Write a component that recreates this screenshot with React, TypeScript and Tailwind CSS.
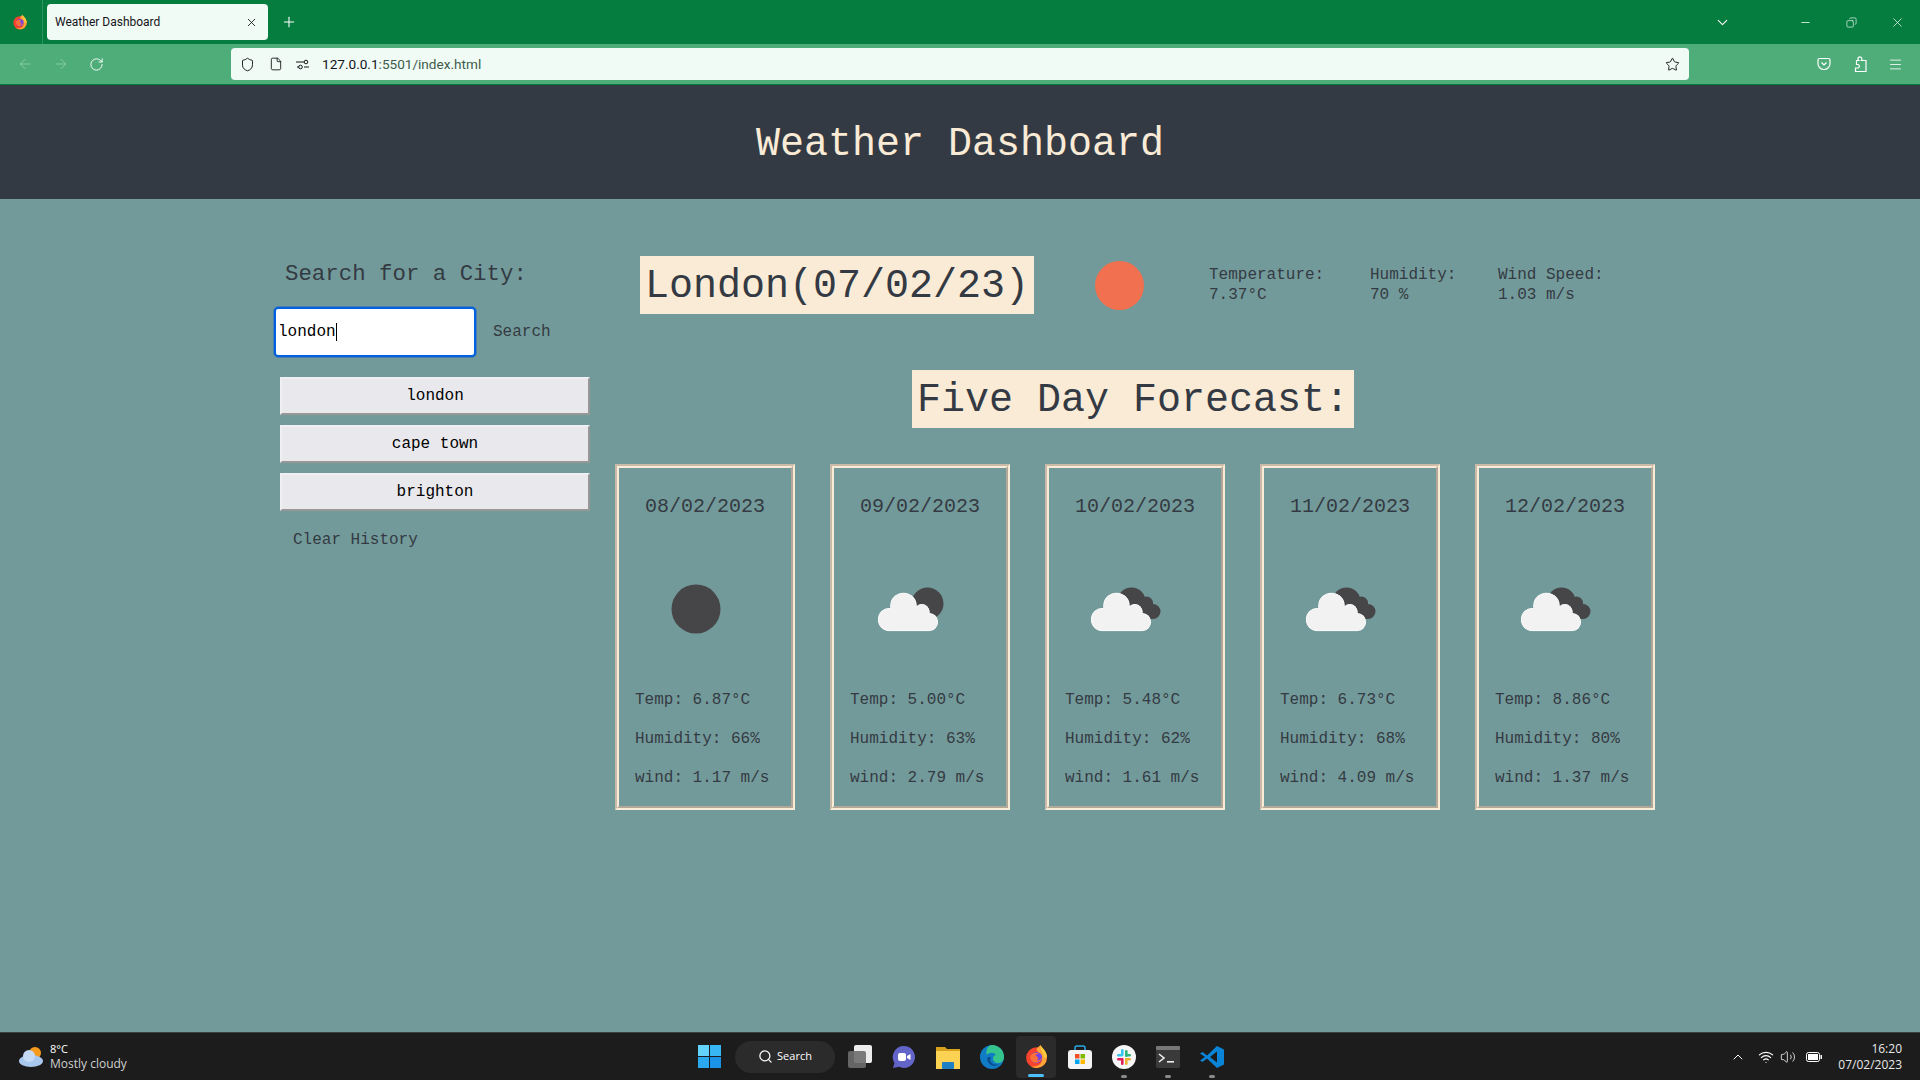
import { ChevronDown, ChevronUp, Copy, Minus, X, Plus, ArrowLeft, ArrowRight, RotateCw, Shield, File, Star, Menu, Search, Wifi, Volume2 } from "lucide-react";

const mono = "font-['Liberation_Mono',monospace]";

const days = [
  { date: "08/02/2023", temp: "6.87", hum: "66", wind: "1.17", icon: "sun" },
  { date: "09/02/2023", temp: "5.00", hum: "63", wind: "2.79", icon: "few" },
  { date: "10/02/2023", temp: "5.48", hum: "62", wind: "1.61", icon: "broken" },
  { date: "11/02/2023", temp: "6.73", hum: "68", wind: "4.09", icon: "broken" },
  { date: "12/02/2023", temp: "8.86", hum: "80", wind: "1.37", icon: "broken" },
];

const CloudShape = ({ fill, stroke }: { fill: string; stroke?: string }) => {
  return (
    <g fill={fill} stroke={stroke} strokeWidth={stroke ? 1.2 : 0}>
      <circle cx="26.5" cy="60.5" r="11" />
      <circle cx="40.5" cy="47" r="12.7" />
      <circle cx="58.800" cy="52.500" r="7" />
      <circle cx="66" cy="63" r="8.500" />
      <rect x="26.500" y="52" width="39.500" height="19.500" />
    </g>
  );
};

const WeatherIcon = ({ kind }: { kind: string }) => {
  return (
    <svg width="100" height="100" viewBox="0 0 100 100">
      {kind === "sun" && <circle cx="50" cy="50" r="24.5" fill="#464548" />}
      {kind === "few" && <circle cx="66.500" cy="44.500" r="16" fill="#464548" />}
      {kind === "broken" && (
        <g fill="#464548">
          <circle cx="55.500" cy="42.500" r="14" />
          <circle cx="70.500" cy="44" r="6.500" />
          <circle cx="77" cy="52.500" r="7.500" />
          <rect x="55" y="44" width="22" height="16" />
        </g>
      )}
      {kind !== "sun" && (
        <g transform={kind === "few" ? "translate(2 0)" : undefined}>
          <CloudShape fill="#ffffff" stroke="#ffffff" />
          <CloudShape fill="#f2f2f2" />
        </g>
      )}
    </svg>
  );
};

const DayCard = ({ date, temp, hum, wind, icon }: (typeof days)[number]) => {
  return (
    <div className="w-[180px] h-[346px] border-2 border-t-[#c9bba8] border-l-[#c9bba8] border-r-[#faebd7] border-b-[#faebd7]">
      <div className="h-full border-2 border-t-[#faebd7] border-l-[#faebd7] border-r-[#b3a898] border-b-[#b3a898] flex flex-col text-[#343a43]">
        <p className="text-center text-[20px] leading-[23px] pt-[27px]">{date}</p>
        <div className="pl-[26.5px] pt-[40.5px] h-[158px]">
          <WeatherIcon kind={icon} />
        </div>
        <div className="pl-[16px] flex flex-col gap-[21px] pt-[15px] text-[16px] leading-[18px]">
          <p>Temp: {temp}°C</p>
          <p>Humidity: {hum}%</p>
          <p>wind: {wind} m/s</p>
        </div>
      </div>
    </div>
  );
};

const Stat = ({ label, value, width }: { label: string; value: string; width: string }) => {
  return (
    <div className={width}>
      <p>{label}</p>
      <p>{value}</p>
    </div>
  );
};

const TaskIcon = ({ children, active, dot }: { children: React.ReactNode; active?: boolean; dot?: boolean }) => {
  return (
    <div className={`relative w-[44px] h-[48px] flex items-center justify-center`}>
      {active && <div className="absolute w-[40px] h-[42px] top-[3px] left-[2px] rounded-[4px] bg-[#2b2b2b]" />}
      <div className="relative">{children}</div>
      {active && <div className="absolute bottom-[4px] left-[14px] w-[16px] h-[3px] rounded-full bg-[#4cc2ff]" />}
      {dot && <div className="absolute bottom-[3px] left-[19px] w-[6px] h-[3px] rounded-full bg-[#8a8a8a]" />}
    </div>
  );
};

const FirefoxLogo = ({ size }: { size: number }) => {
  return (
    <svg width={size} height={size} viewBox="0 0 24 24">
      <circle cx="12" cy="13.2" r="10" fill="#f6432d" />
      <path d="M22 13A10 10 0 0 1 12 23a10 10 0 0 1-6-2c7 2 12-2 11-7-1-4-4-6-5-9 1-2 3-3 4-4 0 3 6 5 6 12z" fill="#ffa436" />
      <path d="M16 1c1 3 6 5 6 12h-3c0-5-4-7-3-12z" fill="#ffcb3d" />
      <circle cx="12" cy="13" r="5.4" fill="#7542e5" />
      <path d="M7.5 10c2-2 6-2 7 0-2-1-3 0-3.5 1 2 1 4 3 1 5 3 0 5-2 5-4 0 4-3 6-6 6s-5-3-5-6c0-1 .5-2 1.5-2z" fill="#ff7139" />
    </svg>
  );
};

const App = () => {
  return (
    <div className={`h-screen w-full flex flex-col overflow-hidden ${mono}`}>
      {/* tab strip */}
      <div className="h-[44px] bg-[#047d3f] flex items-start text-white font-['Open_Sans',sans-serif] shrink-0">
        <div className="w-[43px] h-[44px] border-r border-[#2c9460] flex items-center justify-center pr-[3px]">
          <FirefoxLogo size={16} />
        </div>
        <div className="ml-[4px] mt-[4px] w-[221px] h-[36px] rounded-[4px] bg-[#f0fbf5] text-[#15141a] text-[12px] flex items-center pl-[8px] pr-[10px] justify-between font-['Roboto',sans-serif]">
          <span>Weather Dashboard</span>
          <X size={13} strokeWidth={1.6} />
        </div>
        <div className="ml-[13px] h-[44px] flex items-center">
          <Plus size={16} strokeWidth={1.6} />
        </div>
        <div className="ml-auto flex items-center h-[44px]">
          <ChevronDown size={17} strokeWidth={1.5} className="mr-[68px]" />
          <Minus size={13} strokeWidth={1.4} className="mr-[34px]" />
          <Copy size={11} strokeWidth={1.4} className="mr-[33px] -scale-x-100" />
          <X size={15} strokeWidth={1.1} className="mr-[15px]" />
        </div>
      </div>

      {/* toolbar */}
      <div className="h-[41px] bg-[#4fad7a] border-b-[1px] border-[#047d3f] flex items-center text-white shrink-0">
        <div className="w-[231px] flex items-center pl-[17px] gap-[20px]">
          <ArrowLeft size={16} strokeWidth={1.3} className="text-[#8fcfae]" />
          <ArrowRight size={16} strokeWidth={1.3} className="text-[#8fcfae]" />
          <RotateCw size={15} strokeWidth={1.5} />
        </div>
        <div className="w-[1458px] h-[32px] bg-[#f0fbf5] rounded-[4px] flex items-center text-[#15141a] font-['Roboto',sans-serif] text-[13.6px]">
          <Shield size={15} strokeWidth={1.5} className="ml-[9px]" />
          <File size={14} strokeWidth={1.5} className="ml-[14px]" />
          <svg width="14" height="12" viewBox="0 0 14 12" className="ml-[13px]" fill="none" stroke="#15141a">
            <path d="M0 4h8M1 9h2M8 9h5" />
            <circle cx="10" cy="4" r="1.8" />
            <circle cx="4.5" cy="9" r="1.8" />
          </svg>
          <span className="ml-[12px]">
            127.0.0.1<span className="text-[#3e5a4b]">:5501/index.html</span>
          </span>
          <Star size={15} strokeWidth={1.5} className="ml-auto mr-[9px]" />
        </div>
        <div className="flex-1 flex items-center justify-end pr-[17px] gap-[21px]">
          <svg width="14" height="14" viewBox="0 0 14 14" fill="none" stroke="white" strokeWidth="1.2" className="mr-[1px]">
            <path d="M1 3a1.5 1.5 0 0 1 1.5-1.5h9A1.5 1.5 0 0 1 13 3v3.5a6 6 0 0 1-12 0z" />
            <path d="M4.5 5.5 7 8l2.5-2.5" />
          </svg>
          <svg width="14" height="16" viewBox="0 0 14 16" fill="none" stroke="white" strokeWidth="1.2">
            <path d="M3.500 4.500h2.200a2 2 0 1 1 3.200-1.500c0 .6-.2 1-.5 1.500H13v11H2.500v-3.500H5a1.800 1.800 0 0 0 0-3.500H3.500z" />
          </svg>
          <Menu size={15} strokeWidth={1.3} />
        </div>
      </div>

      {/* page header */}
      <header className="h-[114px] bg-[#343a43] flex items-center justify-center shrink-0 pt-[5px]">
        <h1 className="text-[40px] leading-[46px] text-[#faebd7]">Weather Dashboard</h1>
      </header>

      {/* main */}
      <main className="flex-1 bg-[#739a9a] flex pl-[274px] text-[#343a43]">
        <aside className="w-[341px] shrink-0 pt-[62px]">
          <h2 className="pl-[11px] text-[22.4px] leading-[26px]">Search for a City:</h2>
          <div className="flex items-center mt-[20px]">
            <div className="w-[202px] h-[50px] rounded-[4px] bg-white border-2 border-[#0060df] outline-[1px] outline-[#4a7fb0] flex items-center pl-[2px] text-black text-[16px]">
              london<span className="w-px h-[18px] bg-black" />
            </div>
            <button className="ml-[17px] text-[16px]">Search</button>
          </div>
          <div className="pl-[6px] pt-[20px] flex flex-col gap-[10px] w-[316px] text-black">
            {["london", "cape town", "brighton"].map((city) => (
              <button
                key={city}
                className="h-[38px] bg-[#e9e9ed] border-2 border-t-[#f0f0f3] border-l-[#f0f0f3] border-r-[#979797] border-b-[#979797] text-[16px]"
              >
                {city}
              </button>
            ))}
          </div>
          <button className="ml-[19px] mt-[20px] text-[16px] leading-[18px]">Clear History</button>
        </aside>

        <section className="flex-1 pt-[57px]">
          <div className="flex items-start pl-[25px]">
            <div className="h-[58px] w-[394px] bg-[#faebd7] px-[5px] pt-[3px] flex items-center text-[40px] leading-[46px] whitespace-nowrap">
              London(07/02/23)
            </div>
            <div className="w-[49px] h-[49px] rounded-full bg-[#f0704f] ml-[61px] mt-[5px]" />
            <div className="flex ml-[65px] pt-[9px] text-[16px] leading-[20px]">
              <Stat label="Temperature:" value="7.37°C" width="w-[161px]" />
              <Stat label="Humidity:" value="70 %" width="w-[128px]" />
              <Stat label="Wind Speed:" value="1.03 m/s" width="w-[120px]" />
            </div>
          </div>
          <div className="ml-[297px] mt-[56px] w-[442px] h-[58px] bg-[#faebd7] px-[5px] pt-[3px] flex items-center text-[40px] leading-[46px] whitespace-nowrap">
            Five Day Forecast:
          </div>
          <div className="flex gap-[35px] mt-[36px]">
            {days.map((d) => (
              <DayCard key={d.date} {...d} />
            ))}
          </div>
        </section>
      </main>

      {/* windows taskbar */}
      <footer className="h-[48px] bg-[#1c1c1c] border-t border-[#3a3f42] flex items-center relative shrink-0 font-['Open_Sans',sans-serif] text-white">
        <div className="flex items-center pl-[18px] w-[694px] shrink-0">
          <svg width="26" height="22" viewBox="0 0 26 22">
            <circle cx="17" cy="7" r="6" fill="#f49b1d" />
            <ellipse cx="13" cy="15" rx="12" ry="6" fill="#a9c8ee" />
            <circle cx="11" cy="10" r="6" fill="#c5daf4" />
          </svg>
          <div className="ml-[6px] -mt-[2px] text-[11px] leading-[15px]">
            <p>8°C</p>
            <p className="text-[12px] text-[#cfcfcf]">Mostly cloudy</p>
          </div>
        </div>
        <div className="w-[30px] flex justify-center">
          <div className="grid grid-cols-2 gap-[1px] w-[23px] h-[23px]">
            <div className="bg-[#63d3fb]" />
            <div className="bg-[#37b8f5]" />
            <div className="bg-[#2aa9ef]" />
            <div className="bg-[#1a92e6]" />
          </div>
        </div>
        <div className="ml-[11px] w-[100px] h-[32px] rounded-full bg-[#2b2b2b] flex items-center justify-center gap-[4px] text-[11px]">
          <Search size={15} />
          <span>Search</span>
        </div>
        <div className="flex ml-[3px]">
          <TaskIcon>
            <div className="relative w-[24px] h-[23px]">
              <div className="absolute right-0 top-0 w-[18px] h-[18px] rounded-[2px] bg-[#ececec]" />
              <div className="absolute left-0 bottom-0 w-[18px] h-[17px] rounded-[2px] bg-[#6e6e6e]/90" />
            </div>
          </TaskIcon>
          <TaskIcon>
            <svg width="24" height="24" viewBox="0 0 24 24">
              <path d="M12 1a11 11 0 1 1-5 20.8L1 23l1.5-5A11 11 0 0 1 12 1z" fill="#6264c7" />
              <rect x="6" y="8" width="8" height="8" rx="2" fill="#fff" />
              <path d="M15 11l3.500-2v6L15 13z" fill="#fff" />
            </svg>
          </TaskIcon>
          <TaskIcon>
            <svg width="24" height="24" viewBox="0 0 24 24">
              <path d="M0 2h9l2 2h13v4H0z" fill="#d8a21f" />
              <rect y="6" width="24" height="18" fill="#fbd251" />
              <rect x="6" y="17" width="12" height="7" rx="1" fill="#1f7fc4" />
            </svg>
          </TaskIcon>
          <TaskIcon>
            <svg width="24" height="24" viewBox="0 0 24 24">
              <circle cx="12" cy="12" r="12" fill="#0f7cc5" />
              <path d="M12 0a12 12 0 0 1 12 12c0 4-3 6-6 6s-5-2-5-5c0-2 2-3 3-3-2-3-7-3-9 0C5 6 8 0 12 0z" fill="#35c48d" />
              <path d="M7 13c0 5 4 8 8 8a10 10 0 0 0 5-2c-3 1-7 1-9-2-1-2-1-3 0-5-2 0-4 0-4 1z" fill="#0a4f8f" />
            </svg>
          </TaskIcon>
          <TaskIcon active>
            <FirefoxLogo size={25} />
          </TaskIcon>
          <TaskIcon>
            <svg width="24" height="24" viewBox="0 0 24 24">
              <path d="M7 6V3a2 2 0 0 1 2-2h6a2 2 0 0 1 2 2v3" fill="none" stroke="#29a8e8" strokeWidth="1.5" />
              <rect y="5" width="24" height="19" rx="3" fill="#f4f4f4" />
              <rect x="7" y="9" width="4.500" height="4.500" fill="#f25022" />
              <rect x="12.500" y="9" width="4.500" height="4.500" fill="#7fba00" />
              <rect x="7" y="14.500" width="4.500" height="4.500" fill="#00a4ef" />
              <rect x="12.500" y="14.500" width="4.500" height="4.500" fill="#ffb900" />
            </svg>
          </TaskIcon>
          <TaskIcon dot>
            <svg width="24" height="24" viewBox="0 0 24 24">
              <circle cx="12" cy="12" r="12" fill="#f6f6f6" />
              <rect x="9" y="4" width="2.600" height="7" rx="1.300" fill="#36c5f0" />
              <rect x="5" y="9" width="6" height="2.600" rx="1.300" fill="#36c5f0" />
              <rect x="13" y="5" width="2.600" height="7" rx="1.300" fill="#2eb67d" />
              <rect x="13" y="9" width="6" height="2.600" rx="1.300" fill="#2eb67d" />
              <rect x="13" y="13" width="2.600" height="7" rx="1.300" fill="#ecb22e" />
              <rect x="13" y="13" width="6" height="2.600" rx="1.300" fill="#ecb22e" />
              <rect x="9" y="13" width="2.600" height="7" rx="1.300" fill="#e01e5a" />
              <rect x="5" y="13" width="6" height="2.600" rx="1.300" fill="#e01e5a" />
            </svg>
          </TaskIcon>
          <TaskIcon dot>
            <svg width="24" height="22" viewBox="0 0 24 22">
              <rect width="24" height="22" rx="2" fill="#3a3a3a" />
              <rect width="24" height="4" rx="1" fill="#777" />
              <path d="M3 8l5 4-5 4" fill="none" stroke="#eee" strokeWidth="1.600" />
              <rect x="11" y="15" width="7" height="1.600" fill="#eee" />
            </svg>
          </TaskIcon>
          <TaskIcon dot>
            <svg width="24" height="24" viewBox="0 0 24 24">
              <path d="M17 1l7 3.500v15L17 23 7 13.500 2.500 17 0 15.500 5 12 0 8.500 2.500 7 7 10.500z" fill="#0a84d6" />
              <path d="M17 6.500 10 12l7 5.500z" fill="#1c1c1c" />
            </svg>
          </TaskIcon>
        </div>
        <div className="ml-auto flex items-center pr-[18px]">
          <ChevronUp size={16} strokeWidth={1.5} className="mr-[12px]" />
          <Wifi size={16} strokeWidth={1.7} className="mr-[6px]" />
          <Volume2 size={16} strokeWidth={1.2} className="mr-[10px]" />
          <svg width="16" height="10" viewBox="0 0 16 10" fill="none" className="mr-[16px]">
            <rect x="0.500" y="0.500" width="13" height="9" rx="2" stroke="white" />
            <rect x="2" y="2" width="10" height="6" fill="white" />
            <rect x="14.500" y="3" width="1.500" height="4" fill="white" />
          </svg>
          <div className="text-right text-[12px] leading-[16px] text-[#e8e8e8]">
            <p>16:20</p>
            <p>07/02/2023</p>
          </div>
        </div>
      </footer>
    </div>
  );
};

export default App;
